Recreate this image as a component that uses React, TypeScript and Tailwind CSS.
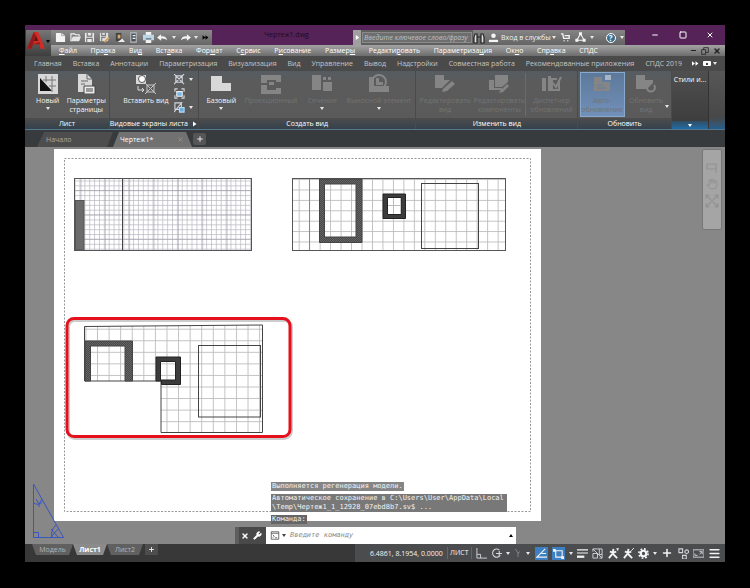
import React from 'react';
import clsx from 'clsx';
import { Minus, Square, X, Plus, Menu, Wrench, Hand } from 'lucide-react';

const menus = [
  ['', 'Ф', 'айл'],
  ['Пра', 'в', 'ка'],
  ['Ви', 'д', ''],
  ['Вст', 'а', 'вка'],
  ['Фор', 'м', 'ат'],
  ['С', 'е', 'рвис'],
  ['Р', 'и', 'сование'],
  ['Размер', 'ы', ''],
  ['Редакти', 'р', 'овать'],
  ['Параметриза', 'ц', 'ия'],
  ['Ок', 'н', 'о'],
  ['Спр', 'а', 'вка'],
  ['СПДС', '', ''],
];

const ribbonTabs = [
  'Главная', 'Вставка', 'Аннотации', 'Параметризация', 'Визуализация', 'Вид', 'Управление',
  'Вывод', 'Надстройки', 'Совместная работа', 'Рекомендованные приложения', 'СПДС 2019',
];

type IconProps = { children: React.ReactNode; className?: string; box?: string };

function Icon({ children, className = 'size-[11px]', box = '0 0 12 12' }: IconProps) {
  return (
    <svg viewBox={box} className={clsx('shrink-0', className)} fill="none" stroke="currentColor" strokeWidth="1.2" aria-hidden="true">
      {children}
    </svg>
  );
}

function Caret({ className = 'text-gray-200' }: { className?: string }) {
  return (
    <svg viewBox="0 0 4 3" className={clsx('w-1 h-[3px] shrink-0', className)} aria-hidden="true">
      <path d="M0 0h4L2 3z" fill="currentColor" />
    </svg>
  );
}

/* ---------- title bar ---------- */

function QuickAccess() {
  return (
    <div className="flex h-[15px] w-[161px] shrink-0 items-center justify-between bg-linear-to-b from-[#8c8c8c] to-[#666] pr-[3px] pl-1 text-gray-100">
      <button aria-label="Создать"><Icon><path d="M1 1h6l4 3v7H1z" fill="#f4f4f4" stroke="none" /><path d="M7 1v3h4" stroke="#999" strokeWidth=".8" /></Icon></button>
      <button aria-label="Открыть"><Icon><path d="M1 10V2h4l1 1h4v2" /><path d="M1 10l2-5h9l-2 5z" fill="#e5e5e5" stroke="none" /></Icon></button>
      <button aria-label="Сохранить"><Icon><path d="M1 1h10v10H1z" fill="#e8e8e8" stroke="none" /><path d="M3.500 1v3.500h5V1M3 11V7h6v4" stroke="#777" /></Icon></button>
      <button aria-label="Сохранить как"><Icon><path d="M1 1h9v9H1z" fill="#ddd" stroke="none" /><path d="M3 1v3h4V1M3 10V6h4" stroke="#777" /><path d="M6 11l5-5" stroke="#d3a15c" strokeWidth="2" /></Icon></button>
      <button aria-label="Экспорт"><Icon><path d="M2 1h6v9H2z" fill="#444" stroke="none" /><path d="M4 3h3v4H4z" fill="#d9a56a" stroke="none" /><path d="M4 11h8L9 7z" fill="#eee" stroke="none" /></Icon></button>
      <button aria-label="Мобильный"><Icon><path d="M3 1h6v10H3z" fill="#46525d" stroke="#bbb" /><path d="M5 4h3M5 7h3" /></Icon></button>
      <button aria-label="Печать"><Icon><path d="M3 0h6v4H3zM3 8h6v4H3z" fill="#f3f3f3" stroke="none" /><path d="M0 3h12v6H0z" fill="#bcd6e2" stroke="none" /><path d="M3 7.500h6" stroke="#567" /></Icon></button>
      <button aria-label="Отменить"><Icon><path d="M0 6l4.500-3.500v2.300Q10 4 11 9 9 6.800 4.500 7.200v2.300z" fill="currentColor" stroke="none" /></Icon></button>
      <Caret />
      <button aria-label="Повторить"><Icon><path d="M12 6L7.500 2.500v2.300Q2 4 1 9 3 6.800 7.500 7.200v2.300z" fill="currentColor" stroke="none" /></Icon></button>
      <Caret />
      <button aria-label="Ещё"><Icon className="size-[7px] text-black"><path d="M1 2l5 4-5 4zM6 2l5 4-5 4z" fill="currentColor" stroke="none" /></Icon></button>
    </div>
  );
}

function TitleBar() {
  return (
    <div className="flex h-[15px]">
      <QuickAccess />
      <div className="min-w-0 flex-1 truncate pl-2 text-center text-[7px] leading-[10px] text-[#1e0a22]">Чертеж1.dwg</div>
      <div className="flex h-[15px] shrink-0 items-center bg-[#5f5f5f]">
        <button aria-label="Свернуть поиск" className="flex h-full w-2 items-center justify-center bg-[#a0a0a0]">
          <Icon className="size-[5px] text-white"><path d="M2 0l8 6-8 6z" fill="currentColor" stroke="none" /></Icon>
        </button>
        <input
          aria-label="Поиск"
          placeholder="Введите ключевое слово/фразу"
          className="mx-px h-[11px] w-[110px] border border-[#8a8a8a] bg-[#6e6e6e] px-px text-[7px] italic placeholder:text-[#c0c0c0]"
        />
      </div>
      <div className="flex h-[15px] w-[152px] shrink-0 items-center bg-linear-to-b from-[#858585] to-[#646464] text-gray-100">
        <button aria-label="Найти"><Icon className="size-3 text-[#222]"><path d="M1 10V5l1-3h2v9H1zM11 10V5l-1-3H8v9h3zM4 5h4" fill="#ddd" /></Icon></button>
        <button className="ml-[3px] flex items-center text-[7px] leading-none">
          <Icon className="size-[11px]"><circle cx="6" cy="4" r="2.500" fill="currentColor" stroke="none" /><path d="M1 11V8.500h10V11z" fill="currentColor" stroke="none" /></Icon>
          <span className="mr-px ml-0.5 whitespace-nowrap">Вход в службы</span>
          <Caret />
        </button>
        <button aria-label="Магазин" className="ml-1"><Icon className="size-[11px]"><path d="M1 2h2l1 5h6V4H5M4 9.500h1M8 9.500h1" strokeWidth="1.500" /></Icon></button>
        <button aria-label="Autodesk" className="ml-1"><Icon><path d="M6 2L2 9h8z" /><path d="M5 1h2v2H5zM1 8h2v2H1zM9 8h2v2H9z" fill="currentColor" /></Icon></button>
        <span className="ml-1"><Caret /></span>
        <button aria-label="Справка" className="ml-3 flex size-[10px] shrink-0 items-center justify-center rounded-full border border-white bg-[#386c91] text-[8px] leading-none font-bold text-white">?</button>
        <span className="ml-1"><Caret /></span>
      </div>
      <div className="flex w-[100px] shrink-0 items-start justify-between pt-px pr-[11px] pl-[26px] text-white">
        <button aria-label="Свернуть"><Minus className="size-2" strokeWidth={3} /></button>
        <button aria-label="Развернуть"><Square className="size-2" strokeWidth={3} /></button>
        <button aria-label="Закрыть"><X className="size-2" strokeWidth={3} /></button>
      </div>
    </div>
  );
}

function MenuBar() {
  return (
    <div className="flex h-[11px] items-center justify-between bg-linear-to-b from-[#a4a4a4] to-[#6d6d6d] pr-1 pl-2">
      <nav className="flex w-[539px] justify-between text-[7px] leading-[11px] text-white">
        {menus.map(([a, b, c]) => (
          <button key={a + b + c} className="whitespace-nowrap">{a}<u>{b}</u>{c}</button>
        ))}
      </nav>
      <div className="flex items-center gap-1 text-[#222]">
        <button aria-label="Свернуть чертеж"><Minus className="size-[7px]" strokeWidth={4} /></button>
        <button aria-label="Восстановить"><Icon className="size-2"><path d="M1 4h6v7H1zM4 4V1h7v7H7" /></Icon></button>
        <button aria-label="Закрыть чертеж"><X className="size-2" strokeWidth={4} /></button>
      </div>
    </div>
  );
}

/* ---------- ribbon ---------- */

function RibbonPanel({ title, children, className }: { title: React.ReactNode; children?: React.ReactNode; className?: string }) {
  return (
    <section className={clsx('flex min-w-0 flex-col border-r border-[#4a4a4a]', className)}>
      <div className="flex flex-1 justify-evenly pt-[2px]">{children}</div>
      <h2 className="flex h-[11px] items-center justify-center gap-1 bg-linear-to-b from-[#4d4d4d] to-[#34414b] text-[7px] leading-none whitespace-nowrap text-white">
        {title}
      </h2>
    </section>
  );
}

type BigButtonProps = { lines: string[]; icon: React.ReactNode; dim?: boolean; caret?: boolean; className?: string };

function BigButton({ lines, icon, dim, caret, className = 'w-10' }: BigButtonProps) {
  return (
    <button disabled={dim} className={clsx('flex h-[43px] shrink-0 flex-col items-center text-[7px] leading-[9px]', dim ? 'text-[#737373]' : 'text-gray-100', className)}>
      <svg viewBox="0 0 20 20" className={clsx('mt-px mb-[2px] size-5', dim ? 'text-[#858585]' : 'text-[#d8d8d8]')} fill="currentColor" aria-hidden="true">{icon}</svg>
      {lines.map((l) => <span key={l} className="whitespace-nowrap">{l}</span>)}
      {caret && <span className="mt-0.5"><Caret /></span>}
    </button>
  );
}

function Ribbon() {
  return (
    <>
      <div className="flex h-[15px] items-center justify-between bg-[#4a4a4a] pr-2 pl-[9px] text-[7px] text-[#c4c4c4]">
        <div className="flex w-[648px] justify-between">
          {ribbonTabs.map((t) => <button key={t} className="leading-[15px] whitespace-nowrap">{t}</button>)}
        </div>
        <div className="flex items-center gap-1">
          <button aria-label="Другие вкладки"><Icon className="size-[7px] text-white"><path d="M0 2l5 4-5 4zM6 2l5 4-5 4z" fill="currentColor" stroke="none" /></Icon></button>
          <button aria-label="Вид ленты" className="flex items-center gap-0.5">
            <span className="flex h-[5px] w-2 items-center justify-center rounded-[1px] bg-white"><span className="size-[2px] bg-[#444]" /></span>
            <Caret />
          </button>
        </div>
      </div>
      <div className="grid h-[59px] grid-cols-[85fr_89fr_218fr_162fr_94fr_37fr_16fr] border-b border-[#55788e] bg-linear-to-b from-[#555c61] via-[#5b5b5b] via-20% to-[#5a5a5a]">
        <RibbonPanel title="Лист">
          <BigButton lines={['Новый']} caret className="ml-1 w-8" icon={<><path d="M0 0h20v20H0z" /><path d="M2 4v13h12z" fill="#111" /><path d="M8 2v6M14 2v16M5 6h13M11 12h7" stroke="#777" fill="none" /></>} />
          <BigButton lines={['Параметры', 'страницы']} icon={<><path d="M2 0h9l5 5v13H2z" /><path d="M11 0v5h5M5 7h7M5 10h4" stroke="#666" fill="none" /><path d="M8 12h11v8H8z" fill="#eee" stroke="#444" /><path d="M10 15h7M10 17h7" stroke="#444" /></>} />
        </RibbonPanel>
        <RibbonPanel title={<>Видовые экраны листа <Icon className="size-[6px]"><path d="M2 1l7 5-7 5z" fill="currentColor" stroke="none" /></Icon></>}>
          <BigButton lines={['Вставить вид']} className="ml-2 w-[46px]" icon={<><path d="M0 1h10v9H0z" /><circle cx="6" cy="5" r="3.500" fill="#fff" stroke="#555" /><path d="M2 12v4h6M6 14l2 2-2 2" stroke="#ddd" fill="none" /><path d="M11 11h7v7h-7zM9 9l11 11M20 9L9 20" stroke="#c8c8c8" fill="none" /></>} />
          <div className="flex flex-col justify-around pb-1 text-gray-300">
            <button aria-label="Прямоугольный" className="flex items-center gap-1"><Icon><path d="M2 2h7v7H2zM0 0l11 11M11 0L0 11" /></Icon><Caret /></button>
            <button aria-label="Обрезать"><Icon><path d="M1 4V1h3M8 1h3v3M11 8v3H8M4 11H1V8" /><path d="M3 4h6v5H3z" fill="#72b8ea" stroke="#eee" /></Icon></button>
            <button aria-label="Блокировать" className="flex items-center gap-1"><Icon><path d="M1 1h7v7H1zM0 11L9 0" /><path d="M6 6h5v5H6z" fill="#69ade0" stroke="#b7dcf4" /></Icon><Caret /></button>
          </div>
        </RibbonPanel>
        <RibbonPanel title="Создать вид">
          <BigButton lines={['Базовый']} caret className="w-9" icon={<path d="M0 2h11v7h9v8H0z" />} />
          <BigButton lines={['Проекционный']} dim className="w-[54px]" icon={<><path d="M0 1h20v7h-5V6H6v3H0zM0 20h20v-6h-5v2H6v-5H0z" /><path d="M8 8h5v3H8z" /></>} />
          <BigButton lines={['Сечение']} dim caret icon={<><path d="M0 1h9v15H0zM11 8h9v9h-9z" /><path d="M11 3h3v3h-3zM16 3h3v3h-3z" /></>} />
          <BigButton lines={['Выносной элемент']} dim caret className="w-16" icon={<><path d="M0 3h5v9h15v6H0z" /><circle cx="10" cy="8" r="7" fill="none" stroke="currentColor" strokeWidth="2" /><path d="M7 4h3v4h4v3H7z" /></>} />
        </RibbonPanel>
        <RibbonPanel title="Изменить вид">
          <BigButton lines={['Редактировать', 'вид']} dim className="w-[50px]" icon={<><path d="M0 1h9v5h6l-8 8H0z" /><path d="M8 15l9-8 3 3-8 7-5 1z" /></>} />
          <BigButton lines={['Редактировать', 'компоненты']} dim className="w-[52px] border-r border-[#6b6b6b]" icon={<><path d="M0 6h5v8h8v2H0zM6 1h13v7l-6 5H6z" /><path d="M11 17l7-7 2 2-6 6-4 1z" /></>} />
          <BigButton lines={['Диспетчер', 'обновлений']} dim className="w-11" icon={<><path d="M0 4h4v13H0zM6 2h3v15H6z" /><path d="M17 8v8h-7V5h5" fill="none" stroke="currentColor" strokeWidth="2" /><path d="M11 9l3 4 5-10" fill="none" stroke="currentColor" strokeWidth="2" /></>} />
        </RibbonPanel>
        <RibbonPanel title="Обновить">
          <BigButton lines={['Авто-', 'обновление']} dim className="w-[43px] bg-linear-to-b from-[#5d7899] to-[#7190ba] outline outline-[#87a9ce]" icon={<><path d="M2 3h8v5h8v9H2z" /><path d="M13 1h6v5h-6z" fill="#a6b5c6" /><path d="M5 11h6M5 14h9" stroke="#637f9f" /></>} />
          <BigButton lines={['Обновить', 'вид']} dim icon={<><path d="M0 1h9v5h8v3l-6 6H0z" /><path d="M18 11a4 4 0 1 1-5-1" fill="none" stroke="currentColor" strokeWidth="2" /></>} />
          <span className="-ml-1 mt-8"><Caret /></span>
        </RibbonPanel>
        <section className="flex flex-col border-r border-[#333] bg-linear-to-b from-[#4f4f4f] to-[#3b3b3b] text-white">
          <h2 className="flex-1 pt-1 text-center text-[7px] leading-[9px] whitespace-nowrap">Стили и...</h2>
          <button aria-label="Развернуть панель" className="flex h-2 items-center justify-center bg-linear-to-b from-[#2f4d63] to-[#1f6ca6]"><Caret className="text-white" /></button>
        </section>
        <div className="bg-linear-to-b from-[#565656] via-[#484848] via-80% to-[#215e8d]" />
      </div>
    </>
  );
}

function FileTabs() {
  return (
    <div className="flex h-[17px] items-end bg-[#383b3e] pl-3 text-[7px] leading-none text-[#aaa]">
      <button className="h-[15px] w-[76px] bg-[#4d4d4d] pl-[9px] text-left [clip-path:polygon(7px_0,100%_0,calc(100%-6px)_100%,0_100%)]">Начало</button>
      <div className="flex h-[15px] w-[79px] items-center justify-between bg-[#717171] pr-2 pl-[7px] text-white [clip-path:polygon(6px_0,calc(100%-6px)_0,100%_100%,0_100%)]">
        <button>Чертеж1*</button>
        <button aria-label="Закрыть вкладку" className="text-[#a5a5a5]"><X className="size-[7px]" strokeWidth={2} /></button>
      </div>
      <button aria-label="Новая вкладка" className="ml-px flex h-3 w-[13px] items-center justify-center self-center rounded-[2px] bg-[#555] text-gray-200"><Plus className="size-2" strokeWidth={3} /></button>
    </div>
  );
}

/* ---------- sheet ---------- */

function Sheet() {
  return (
    <svg viewBox="54 149 487 372" className="mt-[2px] ml-[29px] h-[372px] w-[487px] bg-white" fill="none" stroke="#444" role="img" aria-label="Чертеж">
      <defs>
        <pattern id="fine" x="79.500" y="180.500" width="4.870" height="4.870" patternUnits="userSpaceOnUse">
          <path d="M0 .5h4.870M.5 0v4.870" stroke="#b6b6be" strokeWidth=".7" />
        </pattern>
        <pattern id="major" x="80.500" y="190" width="24.350" height="24.350" patternUnits="userSpaceOnUse">
          <path d="M0 .5h24.350M.5 0v24.350" stroke="#92929e" strokeWidth=".5" />
        </pattern>
        <pattern id="mid" x="298.700" y="189.500" width="10.470" height="10.400" patternUnits="userSpaceOnUse">
          <path d="M0 .5h10.470M.5 0v10.400" stroke="#bcbcbc" strokeWidth=".9" />
        </pattern>
        <pattern id="wide" x="97" y="328.700" width="11.580" height="11.560" patternUnits="userSpaceOnUse">
          <path d="M0 .5h11.580M.5 0v11.560" stroke="#bcbcbc" strokeWidth=".9" />
        </pattern>
        <pattern id="hatch" width="2" height="2" patternUnits="userSpaceOnUse">
          <path d="M0 0h2v2H0z" fill="#484848" stroke="none" />
          <path d="M0 0h1v1H0zM1 1h1v1H1z" fill="#666" stroke="none" />
        </pattern>
      </defs>

      <rect x="64.500" y="158.500" width="466" height="353" stroke="#999" strokeDasharray="2 1.500" />

      <rect x="74.500" y="178.500" width="177" height="72" fill="url(#fine)" stroke="none" />
      <rect x="74.500" y="178.500" width="177" height="72" fill="url(#major)" stroke="#555" />
      <path d="M122.500 179v71" />
      <rect x="75.500" y="200.500" width="8.500" height="49.500" fill="#6b6b6b" stroke="#555" />

      <rect x="292.500" y="178.500" width="213" height="72" fill="url(#mid)" stroke="#555" />
      <path d="M309.500 179v71" stroke="#888" />
      <path fillRule="evenodd" d="M319.500 179h42.500v63.500h-42.500zM324.500 184v53h31.500v-53z" fill="url(#hatch)" />
      <path fillRule="evenodd" d="M383 194h22.500v24.500H383zM387.500 197.500v17h13.500v-17z" fill="#3c3c3c" stroke="#222" />
      <path d="M388 198h12.500v16H388z" fill="#fff" stroke="none" />
      <path d="M388 205.500h12.500M393.500 198v16" stroke="#bbb" />
      <rect x="421.500" y="183.500" width="57" height="65" />

      <path d="M84.500 326.500l178-1.500v107.500h-101.500v-51.500H84.500z" fill="url(#wide)" />
      <path d="M85 341h47.500v40H125v-35H90.500v35H85z" fill="url(#hatch)" />
      <path fillRule="evenodd" d="M156 357h24.500v27.500H161.500V381H156zM160.500 361.500v18.500h15v-18.500z" fill="#3c3c3c" stroke="#222" />
      <rect x="198.500" y="345.500" width="62" height="71.500" />

      <rect x="68" y="320" width="223" height="118" rx="7" stroke="#000" strokeOpacity=".2" strokeWidth="4" />
      <rect x="67" y="318.500" width="223" height="118" rx="7" stroke="#e5101b" strokeWidth="3" />
    </svg>
  );
}

function CommandLine() {
  return (
    <div className="absolute bottom-0 left-[210px] w-[281px]">
      <div className="ml-9 flex w-[236px] flex-col items-start gap-[3px] font-['DejaVu_Sans_Mono',monospace] text-[7px] leading-[9px] text-gray-100">
        <p className="bg-[#858585] px-px">Выполняется регенерация модели.</p>
        <p className="w-full bg-[#787878] px-px whitespace-nowrap">Автоматическое сохранение в C:\Users\User\AppData\Local<br />\Temp\Чертеж1_1_12928_07ebd8b7.sv$ ...</p>
        <p className="bg-[#666] px-px">Команда:</p>
      </div>
      <div className="mt-[3px] flex h-[17px] items-center bg-white">
        <div className="flex h-full w-[31px] items-center justify-end gap-1 border-l-4 border-[#5e5e5e] bg-[#494949] pr-1 text-white">
          <button aria-label="Закрыть строку"><X className="size-2" strokeWidth={4} /></button>
          <button aria-label="Настройка"><Wrench className="size-[9px]" fill="currentColor" /></button>
        </div>
        <Icon className="ml-1 h-[9px] w-[10px] text-[#444]"><path d="M1 1h10v10H1zM1 3h10M3 5l2 2-2 2M6 9h3" strokeWidth="1" /></Icon>
        <span className="ml-0.5"><Caret className="text-[#444]" /></span>
        <input aria-label="Команда" placeholder="Введите команду" className="ml-1 min-w-0 flex-1 font-['DejaVu_Sans_Mono',monospace] text-[7px] italic outline-none placeholder:text-[#888]" />
        <button aria-label="История" className="mr-[3px] rotate-180"><Caret className="text-black" /></button>
      </div>
    </div>
  );
}

function Canvas() {
  return (
    <main className="relative flex-1 overflow-hidden bg-[#878787]">
      <Sheet />
      <div className="absolute top-[2px] right-[3px] flex h-[81px] w-5 flex-col items-center gap-1 rounded-[2px] border border-[#777] bg-[#a5a5a5] pt-3 text-[#929292]">
        <Icon className="h-3 w-[14px]"><path d="M1 2h9v5H1zM10 7v4" /></Icon>
        <Hand className="size-3" />
        <Icon className="size-[14px]"><path d="M1 1l10 10M11 1L1 11M1 4V1h3M8 1h3v3M1 8v3h3M11 8v3H8" /></Icon>
      </div>
      <svg viewBox="0 0 34 56" className="absolute bottom-[5px] left-[7px] h-14 w-[34px]" fill="none" stroke="#3a55c4" aria-label="ПСК">
        <path d="M1.500 1v53.500h30zM1.500 49.500h5v5M1.500 20q5 3 9-1M4 16l3 5 3-5M7 21v3M19 46l7 8M26 46l-7 8M24 42q-6 6-4 12" />
      </svg>
      <CommandLine />
    </main>
  );
}

/* ---------- status bar ---------- */

const layoutTab = 'h-[11px] [clip-path:polygon(0_0,100%_0,calc(100%-4px)_100%,4px_100%)]';

function StatusBar() {
  return (
    <footer className="flex h-[18px] items-center bg-[#383838] text-[7px] leading-none text-gray-100">
      <div className="flex flex-1 items-start self-start pl-[7px]">
        <button className={clsx(layoutTab, 'w-[41px] bg-[#606060] text-[#b5b5b5]')}>Модель</button>
        <button className={clsx(layoutTab, 'w-[34px] bg-[#8b8b8b] font-bold text-white')}>Лист1</button>
        <button className={clsx(layoutTab, 'w-[36px] bg-[#606060] text-[#b5b5b5]')}>Лист2</button>
        <button aria-label="Новый лист" className="ml-0.5 flex h-[11px] w-[13px] items-center justify-center bg-[#4d4d4d]"><Plus className="size-[7px]" strokeWidth={3} /></button>
      </div>
      <div className="flex h-full w-[370px] shrink-0 items-center justify-between bg-[#4b4c4e] pr-1 pl-[15px]">
        <span className="whitespace-nowrap">6.4861, 8.1954, 0.0000</span>
        <button className="border-x border-[#666] px-0.5 leading-3">ЛИСТ</button>
        <button aria-label="Сетка" className="text-gray-300"><Icon><path d="M1 0v11h11M1 7h4v4" strokeWidth="1" /></Icon></button>
        <button aria-label="Полярное отслеживание" className="text-gray-300"><Icon><path d="M10 8a4.500 4.500 0 1 1-1-6M5.500 6H12M9 3v6" /></Icon></button>
        <Caret />
        <button aria-label="Изометрия" className="text-gray-400"><Icon className="size-2"><path d="M2 0l4 6v6M6 6l3-2" strokeWidth="1" /></Icon></button>
        <Caret />
        <button aria-label="Привязка отслеживания" className="flex size-[13px] items-center justify-center bg-[#3d7fc0]"><Icon><path d="M10 1L1 10h11M6 6h5" /></Icon></button>
        <button aria-label="Объектная привязка" className="flex size-[13px] items-center justify-center bg-[#3d7fc0]"><Icon><path d="M3 3h7v7H3z" /><path d="M0 1h3v3H0zM9 9h3v3H9z" fill="currentColor" stroke="none" /></Icon></button>
        <Caret />
        <button aria-label="Вес линий"><Icon><path d="M0 2h12M0 5.500h12" /><path d="M0 9.500h8" strokeWidth="2.500" /></Icon></button>
        <button aria-label="Прозрачность" className="text-gray-300"><Icon><path d="M1 4V1h10v10H8M1 1l10 10M1 11V6h5v5zM8 1v6h3" strokeWidth="1" /></Icon></button>
        <button aria-label="Масштаб аннотаций"><Icon><path d="M6 1L5 6l-4 5M5 6l5 5M2 4l4 1 3-1" strokeWidth="2" /><path d="M9 1h3M10.500 0v3" strokeWidth="1" /></Icon></button>
        <button aria-label="Автомасштаб"><Icon><path d="M6 1L5 6l-4 5M5 6l5 5M2 4l4 1 3-1" strokeWidth="2" /><path d="M9 3l3-3" strokeWidth="1" /></Icon></button>
        <button aria-label="Рабочее пространство"><Icon><circle cx="6" cy="6" r="3" strokeWidth="2.400" /><circle cx="6" cy="6" r="5" strokeWidth="1.800" strokeDasharray="1.960 1.960" /></Icon></button>
        <Caret />
        <button aria-label="Монитор аннотаций"><Plus className="size-3" strokeWidth={3} /></button>
        <button aria-label="Изоляция объектов" className="text-gray-300"><Icon><path d="M1 1h4v4H1zM5 8h4v4H5z" /><circle cx="9.500" cy="4" r="2" /></Icon></button>
        <button aria-label="Очистить экран" className="text-gray-300"><Icon><path d="M0 2h12v8H0zM7 7l3-3M7 4h3v3M2 6v2h3" strokeWidth="1" /></Icon></button>
        <button aria-label="Адаптация"><Menu className="size-[13px]" strokeWidth={3} /></button>
      </div>
    </footer>
  );
}

export default function App() {
  return (
    <div className="flex min-h-screen flex-col bg-black px-[25px] pt-[25px] pb-[26px] font-['Open_Sans','Noto_Sans',sans-serif]">
      <div className="flex flex-1 flex-col overflow-hidden">
        <header className="flex bg-[#552358] pt-[5px]">
          <button aria-label="Меню приложения" className="ml-px flex h-[26px] w-[25px] shrink-0 items-center bg-linear-to-b from-[#777] to-[#3e3e3e] pb-1">
            <svg viewBox="0 0 18 18" className="size-5" aria-hidden="true">
              <path d="M1 16L7 1h4l6 15h-4l-1-4H6l-1 4z" fill="#d52b26" />
              <path d="M7 9l2-5 2 5z" fill="#5a1714" />
              <path d="M1 16L7 1l2 3-4 12zM6 12l6-2 1 2z" fill="#981b1c" />
            </svg>
            <Caret className="text-black" />
          </button>
          <div className="min-w-0 flex-1">
            <TitleBar />
            <MenuBar />
          </div>
        </header>
        <Ribbon />
        <FileTabs />
        <Canvas />
        <StatusBar />
      </div>
    </div>
  );
}
